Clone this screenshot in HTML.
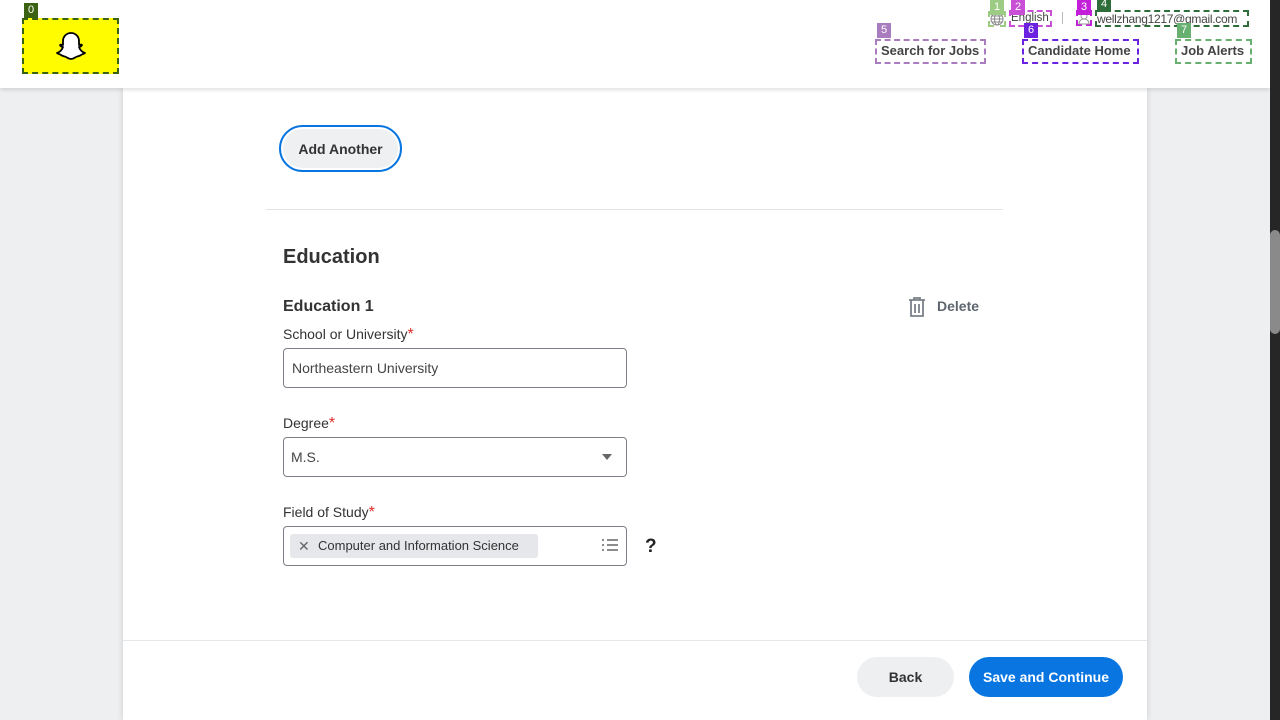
<!DOCTYPE html>
<html><head><meta charset="utf-8"><style>
*{box-sizing:border-box;margin:0;padding:0}
body{width:1280px;height:720px;overflow:hidden;background:#eeeff1;font-family:"Liberation Sans",sans-serif;color:#333;position:relative}
.hdr{position:absolute;left:0;top:0;width:1270px;height:88px;background:#fff;box-shadow:0 2px 4px rgba(0,0,0,.12);z-index:2}
.card{position:absolute;left:123px;top:88px;width:1024px;height:632px;background:#fff;box-shadow:0 0 6px rgba(0,0,0,.15)}
.sb{position:absolute;left:1270px;top:0;width:10px;height:720px;background:#262627;z-index:3}
.thumb{position:absolute;left:1270px;top:230px;width:10px;height:104px;background:#8a8a8a;border-radius:5px;z-index:4}
.a{position:absolute}
.tag{position:absolute;color:#fff;font-size:11px;line-height:14px;text-align:center;width:14px;height:15px}
.box{position:absolute;border:2px dashed}
.lbl{position:absolute;font-size:14px;color:#333}
.lbl b{color:#de2d26;font-weight:normal;font-size:16px}
.inp{position:absolute;border:1px solid #7b8088;border-radius:4px;background:#fff;font-size:14px;color:#444}
</style></head><body>
<div class="hdr">
 <div class="a" style="left:22px;top:18px;width:97px;height:56px;background:#fffc00;border:2px dashed #3b6212"></div>
 <svg class="a" style="left:55px;top:30px" width="32" height="32" viewBox="0 0 32 32"><path d="M16 3c-5 0-8 4-8 8v4c-1 0-2-1-3 0 0 1 2 2 3 2-1 3-3 5-6 6 1 1 3 1 4 2 1 1 3 1 5 2 2 1 3 2 5 2s3-1 5-2c2-1 4-1 5-2 1-1 3-1 4-2-3-1-5-3-6-6 1 0 3-1 3-2-1-1-2 0-3 0v-4c0-4-3-8-8-8z" fill="#fff" stroke="#000" stroke-width="1.8" stroke-linejoin="round"/></svg>
 <div class="tag" style="left:24px;top:3px;background:#3b6212">0</div>

 <div class="box" style="left:988px;top:11px;width:18px;height:16px;border-color:#9ccc84"></div>
 <svg class="a" style="left:990px;top:12px" width="14" height="14" viewBox="0 0 14 14" fill="none" stroke="#888" stroke-width="1"><circle cx="7" cy="7" r="6"/><ellipse cx="7" cy="7" rx="2.5" ry="6"/><path d="M1 7h12M2 4h10M2 10h10"/></svg>
 <div class="tag" style="left:990px;top:0;background:#9ccc84">1</div>
 <div class="box" style="left:1009px;top:10px;width:43px;height:17px;border-color:#c94fd6"></div>
 <div class="a" style="left:1011px;top:12px;font-size:11.5px;color:#444">English</div>
 <div class="tag" style="left:1011px;top:0;background:#c94fd6">2</div>
 <div class="a" style="left:1062px;top:12px;width:1px;height:12px;background:#bbb"></div>
 <div class="box" style="left:1076px;top:10px;width:16px;height:16px;border-color:#c11fd8"></div>
 <svg class="a" style="left:1077px;top:11px" width="14" height="14" viewBox="0 0 14 14" fill="none" stroke="#999" stroke-width="1"><circle cx="7" cy="5" r="3"/><path d="M2 13c0-3 2-5 5-5s5 2 5 5z"/></svg>
 <div class="tag" style="left:1077px;top:0;background:#c11fd8">3</div>
 <div class="box" style="left:1095px;top:10px;width:154px;height:17px;border-color:#2f6e3b"></div>
 <div class="a" style="left:1097px;top:12px;font-size:12px;color:#444;letter-spacing:-0.3px">wellzhang1217@gmail.com</div>
 <div class="tag" style="left:1097px;top:-3px;background:#2f6e3b">4</div>

 <div class="box" style="left:875px;top:39px;width:111px;height:25px;border-color:#a97cc0"></div>
 <div class="a" style="left:881px;top:43px;font-size:13px;font-weight:bold;color:#444">Search for Jobs</div>
 <div class="tag" style="left:877px;top:23px;background:#a97cc0">5</div>
 <div class="box" style="left:1022px;top:39px;width:117px;height:25px;border-color:#6a22e0"></div>
 <div class="a" style="left:1028px;top:43px;font-size:13px;font-weight:bold;color:#444">Candidate Home</div>
 <div class="tag" style="left:1024px;top:23px;background:#6a22e0">6</div>
 <div class="box" style="left:1175px;top:39px;width:77px;height:25px;border-color:#67b06f"></div>
 <div class="a" style="left:1181px;top:43px;font-size:13px;font-weight:bold;color:#444">Job Alerts</div>
 <div class="tag" style="left:1177px;top:23px;background:#67b06f">7</div>
</div>

<div class="card"></div>
<div class="a" style="left:279px;top:125px;width:123px;height:47px;border:2px solid #0875e1;border-radius:24px;background:#eff0f2;box-shadow:inset 0 0 0 2px #fff;font-size:14px;font-weight:bold;text-align:center;line-height:45px;color:#333">Add Another</div>
<div class="a" style="left:266px;top:209px;width:737px;height:1px;background:#e3e4e6"></div>
<div class="a" style="left:283px;top:246px;font-size:20px;font-weight:bold;color:#333">Education</div>
<div class="a" style="left:283px;top:298px;font-size:16px;font-weight:bold;color:#333">Education 1</div>
<svg class="a" style="left:907px;top:296px" width="20" height="22" viewBox="0 0 20 22" fill="none" stroke="#7b8088" stroke-width="1.8"><path d="M2 4h16M7 4V2h6v2M4 4v16h12V4M8 8v9M12 8v9"/></svg>
<div class="a" style="left:937px;top:298px;font-size:14px;font-weight:bold;color:#5e6670">Delete</div>

<div class="lbl" style="left:283px;top:326px">School or University<b>*</b></div>
<div class="inp" style="left:283px;top:348px;width:344px;height:40px;padding:11px 8px">Northeastern University</div>
<div class="lbl" style="left:283px;top:415px">Degree<b>*</b></div>
<div class="inp" style="left:283px;top:437px;width:344px;height:40px;padding:11px 7px">M.S.</div>
<div class="a" style="left:602px;top:454px;width:0;height:0;border-left:5px solid transparent;border-right:5px solid transparent;border-top:6px solid #666"></div>
<div class="lbl" style="left:283px;top:504px">Field of Study<b>*</b></div>
<div class="inp" style="left:283px;top:526px;width:344px;height:40px"></div>
<div class="a" style="left:290px;top:534px;width:248px;height:24px;background:#e5e7ea;border-radius:3px;font-size:13px;color:#333;line-height:24px;padding-left:28px">Computer and Information Science</div>
<div class="a" style="left:298px;top:534px;font-size:14px;color:#666;line-height:24px">✕</div>
<svg class="a" style="left:601px;top:538px" width="18" height="14" viewBox="0 0 18 14" stroke="#666" stroke-width="1.5"><path d="M1 2h2M6 2h11M1 7h2M6 7h11M1 12h2M6 12h11"/></svg>
<div class="a" style="left:645px;top:536px;font-size:19px;font-weight:bold;color:#222">?</div>

<div class="a" style="left:123px;top:640px;width:1024px;height:1px;background:#e6e7e9"></div>
<div class="a" style="left:857px;top:657px;width:97px;height:40px;border-radius:20px;background:#eeeff1;font-size:14px;font-weight:bold;text-align:center;line-height:40px">Back</div>
<div class="a" style="left:969px;top:657px;width:154px;height:40px;border-radius:20px;background:#0875e1;color:#fff;font-size:14px;font-weight:bold;text-align:center;line-height:40px">Save and Continue</div>

<div class="sb"></div><div class="thumb"></div>
</body></html>
